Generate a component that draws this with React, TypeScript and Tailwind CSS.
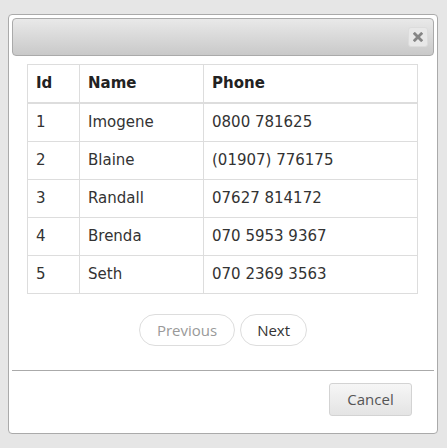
import React from "react";

const rows = [
  { id: 1, name: "Imogene", phone: "0800 781625" },
  { id: 2, name: "Blaine", phone: "(01907) 776175" },
  { id: 3, name: "Randall", phone: "07627 814172" },
  { id: 4, name: "Brenda", phone: "070 5953 9367" },
  { id: 5, name: "Seth", phone: "070 2369 3563" },
];

const tableFont = { fontFamily: '"DejaVu Sans", Verdana, sans-serif' };

export default function App() {
  return (
    <div className="h-[448px] w-[447px] bg-[#e6e6e6] pl-[8px] pt-[14px]">
      {/* Dialog */}
      <div className="flex h-[420px] w-[430px] flex-col rounded-[4px] border border-[#aaaaaa] bg-white p-[3px]">
        {/* Title bar */}
        <div className="flex h-[38px] shrink-0 items-center justify-end rounded-[4px] border border-[#aaaaaa] bg-gradient-to-b from-[#e9e9e9] to-[#c9c9c9] pr-[5px]">
          <button className="flex h-[20px] w-[20px] items-center justify-center rounded-[3px] border border-[#dcdcdc] bg-[#e8e8e8]">
            <svg width="10" height="10" viewBox="0 0 10 10">
              <path d="M1.8 1.8 L8.2 8.2 M8.2 1.8 L1.8 8.2" stroke="#858585" strokeWidth="2.8" strokeLinecap="square" />
            </svg>
          </button>
        </div>

        {/* Content */}
        <div className="flex flex-1 flex-col px-[15px] pt-[8px]">
          <table
            className="w-[391px] table-fixed border-collapse border border-[#dddddd] text-[15px] leading-[21px] text-[#333333]"
            style={tableFont}
          >
            <colgroup>
              <col className="w-[52px]" />
              <col className="w-[124px]" />
              <col />
            </colgroup>
            <thead>
              <tr>
                <th className="border border-b-2 border-[#dddddd] p-[8px] text-left font-bold text-[#222222]">Id</th>
                <th className="border border-b-2 border-[#dddddd] p-[8px] text-left font-bold text-[#222222]">Name</th>
                <th className="border border-b-2 border-[#dddddd] p-[8px] text-left font-bold text-[#222222]">Phone</th>
              </tr>
            </thead>
            <tbody>
              {rows.map((r) => (
                <tr key={r.id}>
                  <td className="border border-[#dddddd] p-[8px]">{r.id}</td>
                  <td className="border border-[#dddddd] p-[8px]">{r.name}</td>
                  <td className="border border-[#dddddd] p-[8px]">{r.phone}</td>
                </tr>
              ))}
            </tbody>
          </table>

          {/* Pager */}
          <div
            className="mt-[20px] flex justify-center gap-[5px] text-[15px] leading-[20px]"
            style={{ fontFamily: '"Open Sans", "Noto Sans", sans-serif' }}
          >
            <span className="rounded-full border border-[#dddddd] bg-white px-[17px] py-[5px] text-[#999999]">
              Previous
            </span>
            <span className="rounded-full border border-[#dddddd] bg-white px-[16px] py-[5px] text-[#333333]">
              Next
            </span>
          </div>
        </div>

        {/* Button pane */}
        <div className="flex shrink-0 justify-end border-t border-[#aaaaaa] pb-[14px] pr-[22px] pt-[12px]">
          <button
            className="h-[33px] w-[83px] rounded-[3px] border border-[#d3d3d3] bg-gradient-to-b from-[#f6f6f6] to-[#e4e4e4] text-[15px] text-[#555555]"
            style={{ fontFamily: '"Open Sans", "Noto Sans", sans-serif' }}
          >
            Cancel
          </button>
        </div>
      </div>
    </div>
  );
}
